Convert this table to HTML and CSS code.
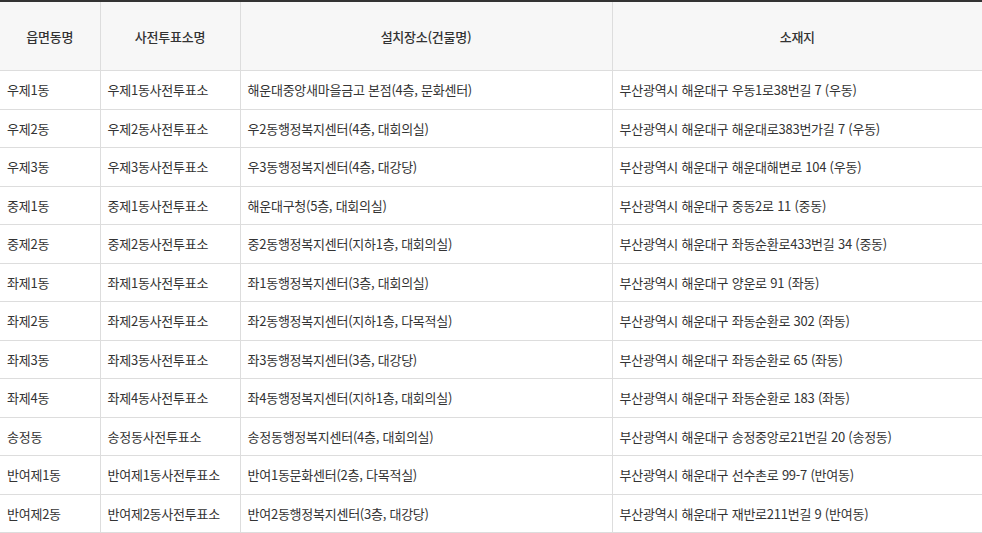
FILE: index.html
```html
<!DOCTYPE html>
<html lang="ko">
<head>
<meta charset="utf-8">
<link rel="stylesheet" href="styles.css">
</head>
<body>
<table class="vote-table">
  <colgroup>
    <col class="c1"><col class="c2"><col class="c3"><col class="c4">
  </colgroup>
  <thead>
    <tr><th>읍면동명</th><th>사전투표소명</th><th>설치장소(건물명)</th><th>소재지</th></tr>
  </thead>
  <tbody>
    <tr><td>우제1동</td><td>우제1동사전투표소</td><td>해운대중앙새마을금고 본점(4층, 문화센터)</td><td>부산광역시 해운대구 우동1로38번길 7 (우동)</td></tr>
    <tr><td>우제2동</td><td>우제2동사전투표소</td><td>우2동행정복지센터(4층, 대회의실)</td><td>부산광역시 해운대구 해운대로383번가길 7 (우동)</td></tr>
    <tr><td>우제3동</td><td>우제3동사전투표소</td><td>우3동행정복지센터(4층, 대강당)</td><td>부산광역시 해운대구 해운대해변로 104 (우동)</td></tr>
    <tr><td>중제1동</td><td>중제1동사전투표소</td><td>해운대구청(5층, 대회의실)</td><td>부산광역시 해운대구 중동2로 11 (중동)</td></tr>
    <tr><td>중제2동</td><td>중제2동사전투표소</td><td>중2동행정복지센터(지하1층, 대회의실)</td><td>부산광역시 해운대구 좌동순환로433번길 34 (중동)</td></tr>
    <tr><td>좌제1동</td><td>좌제1동사전투표소</td><td>좌1동행정복지센터(3층, 대회의실)</td><td>부산광역시 해운대구 양운로 91 (좌동)</td></tr>
    <tr><td>좌제2동</td><td>좌제2동사전투표소</td><td>좌2동행정복지센터(지하1층, 다목적실)</td><td>부산광역시 해운대구 좌동순환로 302 (좌동)</td></tr>
    <tr><td>좌제3동</td><td>좌제3동사전투표소</td><td>좌3동행정복지센터(3층, 대강당)</td><td>부산광역시 해운대구 좌동순환로 65 (좌동)</td></tr>
    <tr><td>좌제4동</td><td>좌제4동사전투표소</td><td>좌4동행정복지센터(지하1층, 대회의실)</td><td>부산광역시 해운대구 좌동순환로 183 (좌동)</td></tr>
    <tr><td>송정동</td><td>송정동사전투표소</td><td>송정동행정복지센터(4층, 대회의실)</td><td>부산광역시 해운대구 송정중앙로21번길 20 (송정동)</td></tr>
    <tr><td>반여제1동</td><td>반여제1동사전투표소</td><td>반여1동문화센터(2층, 다목적실)</td><td>부산광역시 해운대구 선수촌로 99-7 (반여동)</td></tr>
    <tr><td>반여제2동</td><td>반여제2동사전투표소</td><td>반여2동행정복지센터(3층, 대강당)</td><td>부산광역시 해운대구 재반로211번길 9 (반여동)</td></tr>
  </tbody>
</table>
</body>
</html>
```
FILE: styles.css
```css
html, body {
  margin: 0;
  padding: 0;
  background: #fff;
}
body {
  font-family: "Noto Sans CJK KR", "Noto Sans", sans-serif;
  font-size: 13px;
  letter-spacing: -0.25px;
  color: #333;
}
.vote-table {
  width: 982px;
  border-collapse: collapse;
  table-layout: fixed;
  border-top: 2px solid #333;
}
.c1 { width: 100px; }
.c2 { width: 140px; }
.c3 { width: 372px; }
.c4 { width: 370px; }
.vote-table th {
  height: 68px;
  padding: 0;
  background: #f7f7f7;
  font-weight: 500;
  text-align: center;
  border-bottom: 1px solid #ddd;
  border-left: 1px solid #ddd;
  color: #333;
}
.vote-table td {
  height: 37.5px;
  padding: 0 0 0 7px;
  text-align: left;
  border-bottom: 1px solid #ddd;
  border-left: 1px solid #ddd;
  white-space: nowrap;
}
.vote-table th:first-child,
.vote-table td:first-child {
  border-left: 0;
}
```
